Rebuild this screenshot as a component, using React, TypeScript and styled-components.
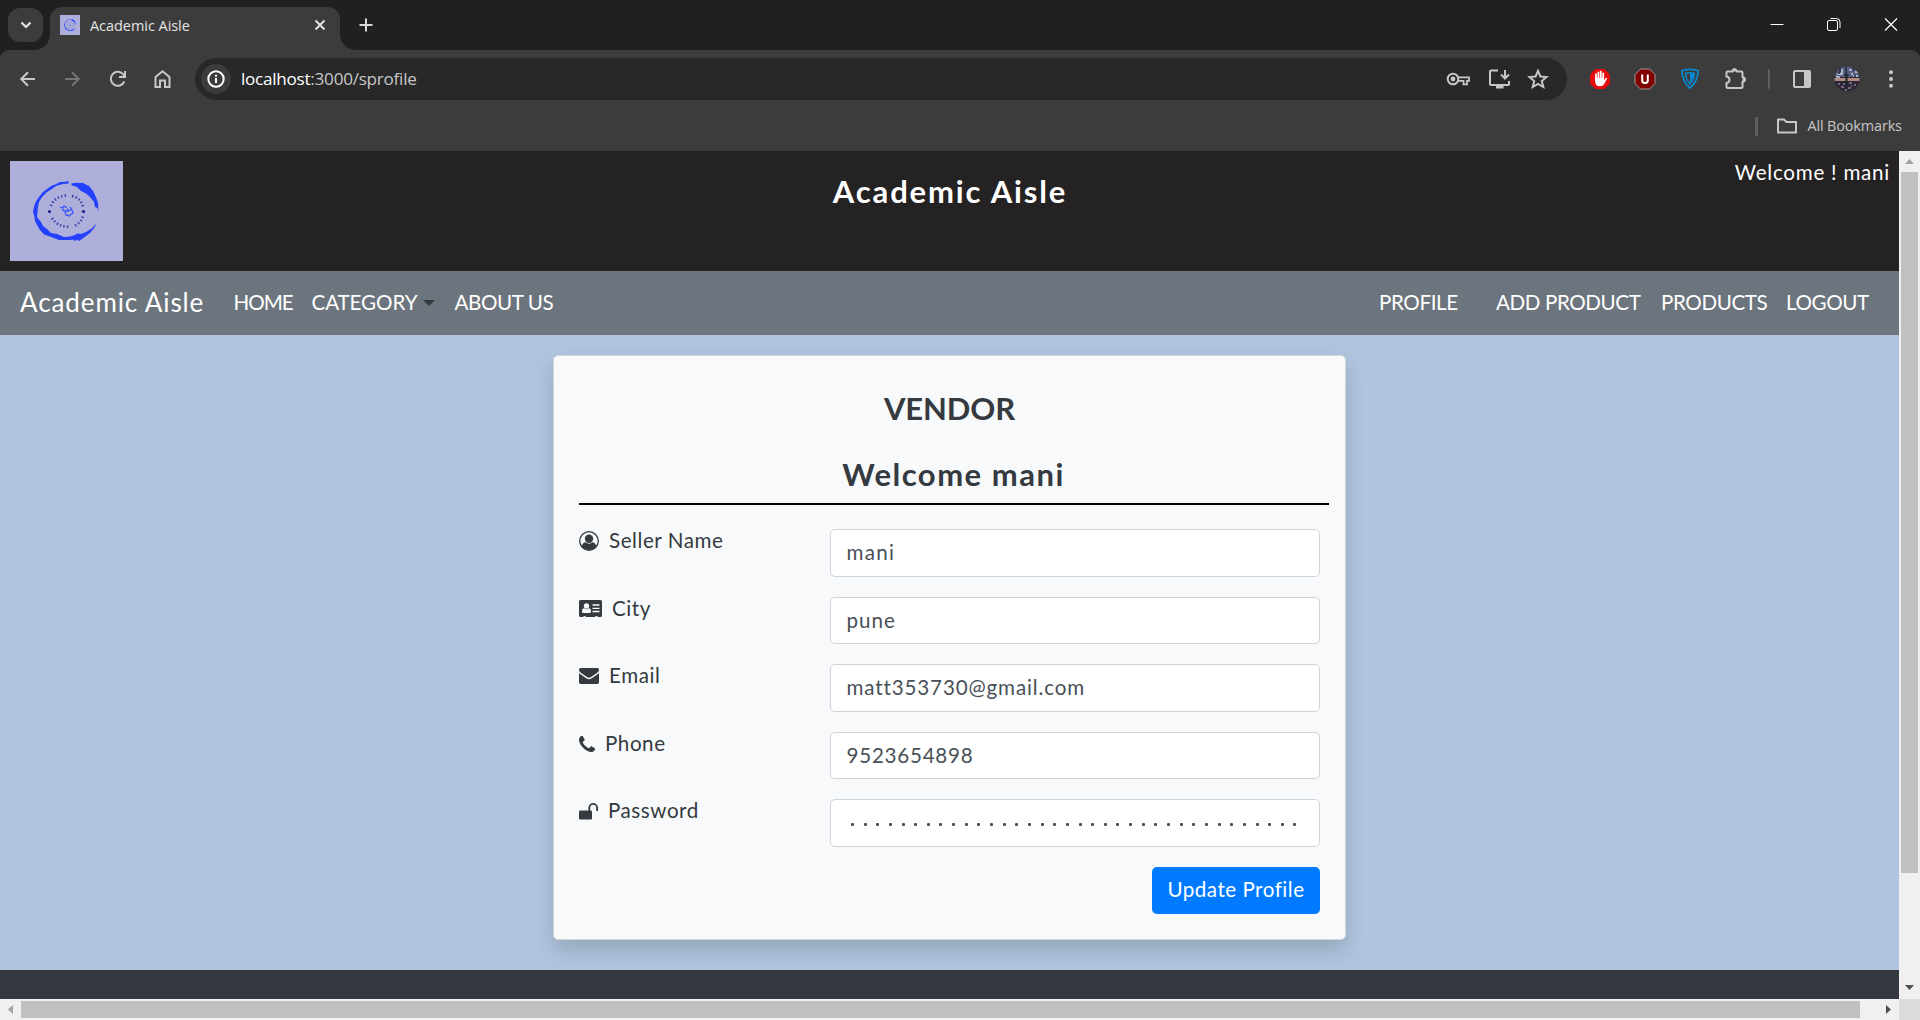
import React from "react";
import styled, { createGlobalStyle } from "styled-components";

const Global = createGlobalStyle`
  *, *::before, *::after { box-sizing: border-box; }
  body { margin: 0; background: #3c3c3c; overflow: hidden; }
`;

const pageFont = `Lato, "Noto Sans", sans-serif`;
const chromeFont = `"Open Sans", "Noto Sans", sans-serif`;

const Window = styled.div`
  width: 1920px;
  height: 1020px;
  display: flex;
  flex-direction: column;
  overflow: hidden;
  background: #3c3c3c;
`;

/* ---------- browser chrome ---------- */
const TabStrip = styled.div`
  height: 50px;
  flex: none;
  display: flex;
  align-items: flex-start;
  background: #1f2120;
  padding-left: 8px;
`;
const TabSearch = styled.div`
  width: 35px;
  height: 34px;
  margin: 8px 7px 0 0;
  border-radius: 12px;
  background: #3c3c3c;
  display: grid;
  place-items: center;
`;
const Tab = styled.div`
  position: relative;
  width: 290px;
  height: 43px;
  margin-top: 7px;
  border-radius: 12px 12px 0 0;
  background: #3c3c3c;
  display: flex;
  align-items: center;
  padding: 0 10px 7px 10px;
  &::before, &::after {
    content: "";
    position: absolute;
    bottom: 0;
    width: 15px;
    height: 15px;
  }
  &::before { left: -15px; background: radial-gradient(circle at 0 0, transparent 14.5px, #3c3c3c 15px); }
  &::after { right: -15px; background: radial-gradient(circle at 100% 0, transparent 14.5px, #3c3c3c 15px); }
`;
const TabTitle = styled.span`
  flex: 1;
  margin-left: 10px;
  padding-top: 1px;
  font: 400 14.5px/20px ${chromeFont};
  letter-spacing: -0.05px;
  color: #e3e3e3;
  white-space: nowrap;
`;
const NewTab = styled.div`
  margin: 15px 0 0 16px;
  width: 20px;
  height: 20px;
`;
const Controls = styled.div`
  margin-left: auto;
  display: flex;
  align-items: center;
  gap: 41px;
  height: 50px;
  padding-right: 21px;
`;
const Toolbar = styled.div`
  position: relative;
  height: 59px;
  flex: none;
  display: flex;
  align-items: center;
  padding-bottom: 1px;
  background: #3c3c3c;
  &::before, &::after {
    content: "";
    position: absolute;
    top: 0;
    width: 9px;
    height: 9px;
  }
  &::before { left: 0; background: radial-gradient(circle at 100% 100%, transparent 8.5px, #1f2120 9px); }
  &::after { right: 0; background: radial-gradient(circle at 0 100%, transparent 8.5px, #1f2120 9px); }
`;
const NavIcons = styled.div`
  display: flex;
  align-items: center;
  gap: 25px;
  width: 195px;
  padding-left: 18px;
`;
const AddressBar = styled.div`
  width: 1372px;
  height: 42px;
  border-radius: 21px;
  background: #282828;
  display: flex;
  align-items: center;
  padding: 0 18px 0 6px;
`;
const InfoDisc = styled.div`
  width: 30px;
  height: 30px;
  border-radius: 50%;
  background: #3c3c3c;
  display: grid;
  place-items: center;
`;
const Url = styled.span`
  flex: 1;
  margin-left: 10px;
  font: 400 17.1px/26px ${chromeFont};
  letter-spacing: -0.25px;
  color: #c7c7c7;
  b { font-weight: 400; color: #fff; }
`;
const AddressIcons = styled.div`
  display: flex;
  align-items: center;
  gap: 16.5px;
`;
const Extensions = styled.div`
  display: flex;
  align-items: center;
  gap: 21px;
  margin-left: 21px;
`;
const Divider = styled.i<{ $h: number; $w: number }>`
  width: ${(p) => p.$w}px;
  height: ${(p) => p.$h}px;
  background: #5e5e5e;
  border-radius: 1px;
`;
const RightTools = styled.div`
  display: flex;
  align-items: center;
  margin-left: 21px;
  gap: 21px;
`;
const Bookmarks = styled.div`
  height: 42px;
  flex: none;
  display: flex;
  align-items: center;
  justify-content: flex-end;
  padding: 0 18px 8px 0;
`;
const FolderWrap = styled.div`
  margin: 0 10px 0 18px;
  display: flex;
`;
const BookmarkText = styled.span`
  width: 94.5px;
  white-space: nowrap;
  font: 400 14.4px/20px ${chromeFont};
  letter-spacing: -0.12px;
  color: #c7c7c7;
`;

/* ---------- viewport ---------- */
const Viewport = styled.div`
  flex: 1;
  display: grid;
  grid-template-columns: 1899px 21px;
  grid-template-rows: 848px 21px;
`;
const Page = styled.div`
  display: flex;
  flex-direction: column;
  background: #b0c4de;
  overflow: hidden;
  font-family: ${pageFont};
`;
const Banner = styled.header`
  height: 120px;
  flex: none;
  background: #252223;
  display: grid;
  grid-template-columns: 400px 1fr 400px;
  padding: 10px 9px 0 10px;
`;
const BannerTitle = styled.h1`
  margin: 10px 0 0;
  text-align: center;
  color: #fff;
  font-weight: 700;
  font-size: 31px;
  line-height: 40px;
  letter-spacing: 1.85px;
`;
const Greeting = styled.div`
  margin-top: -1px;
  text-align: right;
  color: #fff;
  font-size: 20.6px;
  line-height: 24px;
  letter-spacing: 0.75px;
`;
const NavBar = styled.nav`
  height: 64px;
  flex: none;
  background: #6c757d;
  display: flex;
  align-items: center;
  color: #fff;
  padding: 0 0 2px 20px;
`;
const Brand = styled.span`
  width: 213.5px;
  font-size: 26px;
  line-height: 32px;
  letter-spacing: 0.9px;
  white-space: nowrap;
`;
const NavLink = styled.a<{ $w: number; $ls?: number }>`
  width: ${(p) => p.$w}px;
  font-size: 20.6px;
  line-height: 30px;
  letter-spacing: ${(p) => p.$ls ?? -0.4}px;
  white-space: nowrap;
`;
const Caret = styled.i`
  width: 0;
  border: 6px solid transparent;
  border-top-color: #343a40;
  border-bottom: 0;
  margin: 2px 20px 0 0;
`;
const RightLinks = styled.div`
  display: flex;
  margin-left: auto;
`;
const Main = styled.main`
  flex: none;
  height: 635px;
  padding-top: 20px;
  display: flex;
  justify-content: center;
  align-items: flex-start;
`;
const Card = styled.section`
  width: 793px;
  height: 585px;
  border: 1px solid #d3d7dc;
  border-radius: 5px;
  background: #f8f9fa;
  box-shadow: 0 10px 20px rgba(0, 0, 0, 0.15);
  padding: 0 25px;
  color: #343a40;
`;
const Heading = styled.h2<{ $top: number; $ls: number; $shift?: number }>`
  margin: 0;
  padding: ${(p) => p.$top}px 0 0 ${(p) => p.$shift ?? 0}px;
  text-align: center;
  font-weight: 700;
  font-size: 31px;
  line-height: 40px;
  letter-spacing: ${(p) => p.$ls}px;
`;
const Rule = styled.hr`
  width: 750px;
  height: 2px;
  border: 0;
  margin: 9px 0 24px;
  background: #000;
`;
const Row = styled.div`
  display: grid;
  grid-template-columns: 251px 490px;
  height: 67.5px;
`;
const Label = styled.label`
  display: flex;
  align-items: center;
  height: 24px;
  font-size: 20.6px;
  line-height: 24px;
  letter-spacing: 0.55px;
  white-space: nowrap;
  svg { flex: none; }
`;
const LabelText = styled.span<{ $gap: number }>`
  margin-left: ${(p) => p.$gap}px;
  padding-bottom: 2px;
`;
const Field = styled.div<{ $ls: number }>`
  height: 47.5px;
  border: 1px solid #ced4da;
  border-radius: 5px;
  background: #fff;
  padding: 0 15.5px;
  font-size: 20.6px;
  line-height: 44px;
  letter-spacing: ${(p) => p.$ls}px;
  color: #495057;
`;
const Dots = styled.div`
  height: 46px;
  display: flex;
  align-items: center;
  gap: 9.65px;
  padding: 3px 0 0 4.5px;
  i { width: 3px; height: 3px; border-radius: 1px; background: #495057; flex: none; }
`;
const Actions = styled.div`
  display: flex;
  width: 741px;
  justify-content: flex-end;
`;
const Update = styled.button`
  width: 168px;
  height: 47px;
  border: 0;
  border-radius: 5px;
  padding: 0 0 2px;
  background: #007bff;
  color: #fff;
  font: 400 20.6px/44px ${pageFont};
  letter-spacing: 0.5px;
  white-space: nowrap;
`;
const Footer = styled.footer`
  flex: 1;
  background: #343841;
`;
const VScroll = styled.div`
  background: #f0f0f0;
  display: flex;
  flex-direction: column;
  align-items: center;
`;
const VThumb = styled.div`
  width: 17px;
  height: 701px;
  margin-bottom: auto;
  background: #c0c0c0;
`;
const HScroll = styled.div`
  background: #f0f0f0;
  display: flex;
  align-items: center;
`;
const HThumb = styled.div`
  width: 1839px;
  height: 17px;
  margin-right: auto;
  background: #c0c0c0;
`;
const Corner = styled.div`
  background: #dcdcdc;
`;
const ArrowBox = styled.div<{ $w: number; $h: number }>`
  width: ${(p) => p.$w}px;
  height: ${(p) => p.$h}px;
  display: grid;
  place-items: center;
`;
const Arrow = styled.i<{ $dir: "up" | "down" | "left" | "right" }>`
  width: 9px;
  height: 9px;
  background: ${(p) => (p.$dir === "up" || p.$dir === "left" ? "#a3a3a3" : "#505050")};
  clip-path: ${(p) =>
    ({
      up: "polygon(0 78%, 50% 22%, 100% 78%)",
      down: "polygon(0 22%, 100% 22%, 50% 78%)",
      left: "polygon(78% 0, 78% 100%, 22% 50%)",
      right: "polygon(22% 0, 78% 50%, 22% 100%)",
    })[p.$dir]};
`;

const stroke = { fill: "none", stroke: "#c7c7c7", strokeWidth: 2 } as const;

/* Ink ring with a circular motto and a small emblem in the middle */
const Logo = ({ w, h }: { w: number; h: number }) => (
  <svg width={w} height={h} viewBox="0 0 113 100" preserveAspectRatio="none">
    <rect width="113" height="100" fill="#aeaedb" />
    <g fill="#2440ff">
      <path d="M58 20 L54 21 L50 21 L45 23.500 L41 25 L37 28 L33 31 L29 36 L27 39 Q24.500 42 24 46 L23 51 L24.500 56 L25 60 L27 64 L30 69 L34 73.500 L40 75.500 L49 79 L60 79 L63 78.500 L65 80 L67 78.500 L69 80 L72 78 L76 75 L80 72 L84 67 L87 62 L81 68 L76 71 L71 73 L67 72.500 L65 74 L60 75.500 L54 76 L47 73 L41 72 L37 68 L33 65 L31 61 L27 56 L27.500 51 L28 46 L29 41 L32 36 L37 31 L42 28 L46 25 L53 23 L59 22.500 Z" />
      <path d="M61 22.500 L66 21.800 L73 22 L79 25 L83 30 L86 36 L88 42 L88.500 51 L87.500 47 L85 46 L84 41 L80 36 L76 32.500 L71 30 L67 26 L62 24.500 Z" />
    </g>
    <path d="M41 45Q44 36 56 34.500M62 35Q71 37 73 46M42 57Q47 65.500 60 66M65 64.500Q71 61.500 73 55" fill="none" stroke="#3b42a8" strokeWidth="2.600" strokeDasharray="1.400 2.200" />
    <circle cx="39.500" cy="50.500" r="1.600" fill="#1b2390" />
    <circle cx="73.500" cy="50.500" r="1.600" fill="#1b2390" />
    <path d="M50 46l3 1 1-2 3 2M52 48l2 2h4l4-2M60 46l2 3 1 3-3 2M55 51l1 3 4 1M57 48l2 2" fill="none" stroke="#3a52fa" strokeWidth="1.300" />
  </svg>
);

const fields = [
  { label: "Seller Name", value: "mani", gap: 10, ls: 1.3 },
  { label: "City", value: "pune", gap: 9, ls: 1 },
  { label: "Email", value: "matt353730@gmail.com", gap: 10, ls: 0.85 },
  { label: "Phone", value: "9523654898", gap: 10, ls: 0.75 },
  { label: "Password", value: "", gap: 10, ls: 0 },
];

/* Font Awesome 4 shapes: user-circle-o, address-card, envelope, phone, unlock */
const icons = [
  <svg key="u" width="20" height="20" viewBox="0 0 20 20">
    <circle cx="10" cy="10" r="9.300" fill="none" stroke="#343a40" strokeWidth="1.300" />
    <circle cx="10" cy="7.800" r="4.200" fill="#343a40" />
    <path d="M2.600 15.400C3.400 12.400 5 11.300 6.500 11.300Q10 14.200 13.500 11.300C15 11.300 16.600 12.400 17.400 15.400A9.300 9.300 0 0 1 2.600 15.400Z" fill="#343a40" />
  </svg>,
  <svg key="c" width="24" height="18" viewBox="0 0 24 18">
    <path d="M1.500 0h20a1.500 1.500 0 0 1 1.500 1.500v14a1.500 1.500 0 0 1-1.500 1.500h-3v-1h-2v1h-10v-1h-2v1h-3A1.500 1.500 0 0 1 0 15.500v-14A1.500 1.500 0 0 1 1.500 0z" fill="#343a40" />
    <circle cx="7.500" cy="6" r="2.700" fill="#f8f9fa" />
    <path d="M3 11.500Q3 8.300 5.300 8.300Q7.500 10 9.700 8.300Q12 8.300 12 11.500Q12 13 10.500 13h-6Q3 13 3 11.500z" fill="#f8f9fa" />
    <path d="M13.500 5h7M13.500 8.300h7M13.500 11.500h7" stroke="#f8f9fa" strokeWidth="1.300" />
  </svg>,
  <svg key="e" width="20" height="16" viewBox="0 0 20 16">
    <path d="M1.500 0h17Q20 0 20 1.700Q20 3.500 18.300 4.700L12 9Q10 10.400 8 9L1.700 4.700Q0 3.500 0 1.700Q0 0 1.500 0z" fill="#343a40" />
    <path d="M0 5.200L7.200 10.200Q10 12.200 12.800 10.200L20 5.200V14.300Q20 16 18.300 16H1.700Q0 16 0 14.300z" fill="#343a40" />
  </svg>,
  <svg key="p" width="16" height="16" viewBox="0 0 1408 1408">
    <path fill="#343a40" d="M1408 1112q0 27-10 70.500t-21 68.500q-21 50-122 106-94 51-186 51-27 0-52.500-3.500T959 1392t-47.500-14.500T856 1357t-49-18q-98-35-175-83-128-79-264.500-215.500T152 776q-48-77-83-175-3-9-18-49t-20.500-55.500T16 449 3.500 391.500 0 339q0-92 51-186Q107 52 157 31q25-11 68.500-21T296 0q14 0 21 3 18 6 53 76 11 19 30 54t35 63.500 31 53.500q3 4 17.500 25t21.500 35.500 7 28.500q0 20-28.500 50t-62 55-62 53-28.500 46q0 9 5 22.500t8.500 20.500 14 24 11.500 19q76 137 174 235t235 174q2 1 19 11.500t24 14 20.500 8.500 22.500 5q18 0 46-28.500t53-62 55-62 50-28.500q14 0 28.500 7t35.500 21.500 25 17.500q25 15 53.500 31t63.500 35 54 30q70 35 76 53 3 7 3 21z" />
  </svg>,
  <svg key="l" width="19" height="17" viewBox="0 0 19 17">
    <rect x="0" y="7.500" width="13" height="9" rx="1" fill="#343a40" />
    <path d="M10.300 8V4.800a3.900 3.900 0 0 1 7.800 0V8" fill="none" stroke="#343a40" strokeWidth="1.800" />
  </svg>,
];

export default function App() {
  return (
    <Window>
      <Global />
      <TabStrip>
        <TabSearch>
          <svg width="12" height="8" viewBox="0 0 12 8"><path d="M1.500 1.500L6 6l4.500-4.500" {...stroke} stroke="#e3e3e3" strokeWidth="2.200" /></svg>
        </TabSearch>
        <Tab>
          <Logo w={20} h={20} />
          <TabTitle>Academic Aisle</TabTitle>
          <svg width="20" height="20" viewBox="0 0 20 20"><path d="M5.500 5.500l9 9m0-9l-9 9" {...stroke} stroke="#e3e3e3" /></svg>
        </Tab>
        <NewTab>
          <svg width="20" height="20" viewBox="0 0 20 20"><path d="M10 3.500v13M3.500 10h13" {...stroke} stroke="#d8d8d8" /></svg>
        </NewTab>
        <Controls>
          <svg width="16" height="16" viewBox="0 0 16 16"><path d="M1.500 7.500h13" stroke="#fff" /></svg>
          <svg width="16" height="16" viewBox="0 0 16 16" fill="none" stroke="#fff"><rect x="1.500" y="3.500" width="10" height="10" rx="1.500" /><path d="M4.500 1.500h6q3.500 0 3.500 3.500v6" /></svg>
          <svg width="16" height="16" viewBox="0 0 16 16"><path d="M2 1.500l12 12M14 1.500L2 13.500" stroke="#fff" strokeWidth="1.200" /></svg>
        </Controls>
      </TabStrip>
      <Toolbar>
        <NavIcons>
          <svg width="20" height="20" viewBox="0 0 20 20"><path d="M17 10H3.500M10 3.200L3.200 10l6.800 6.800" {...stroke} /></svg>
          <svg width="20" height="20" viewBox="0 0 20 20"><path d="M2 10h13.500M9 3.200l6.800 6.800-6.800 6.800" {...stroke} stroke="#757575" /></svg>
          <svg width="20" height="20" viewBox="0 0 20 20"><path d="M16.300 12.500A7 7 0 1 1 15.500 5.700L16.500 7.200M17 2v6h-6" {...stroke} /></svg>
          <svg width="20" height="20" viewBox="0 0 20 20"><path d="M2.500 8l7-5.800L16.500 8v10H12v-6.500H7V18H2.500z" {...stroke} /></svg>
        </NavIcons>
        <AddressBar>
          <InfoDisc>
            <svg width="18" height="18" viewBox="0 0 18 18"><circle cx="9" cy="9" r="7.700" {...stroke} stroke="#fff" /><path d="M9 8v5M9 4.800v2" stroke="#fff" strokeWidth="2" /></svg>
          </InfoDisc>
          <Url><b>localhost</b>:3000/sprofile</Url>
          <AddressIcons>
            <svg width="24" height="20" viewBox="0 0 24 20"><circle cx="7" cy="10" r="5.300" {...stroke} /><circle cx="7" cy="10" r="2.400" fill="#c7c7c7" /><path d="M12 8.300h11v3.600h-2v3.400h-3.500v-3.400H12" {...stroke} strokeWidth="1.800" /></svg>
            <svg width="24" height="22" viewBox="0 0 24 22"><path d="M11 2.500H4Q3 2.500 3 3.500V16q0 1 1 1h17q1 0 1-1v-3M18 2v8M14 6.500l4 4L22 6.500" {...stroke} /><path d="M9 17h7.500v3.500H9z" fill="#c7c7c7" /></svg>
            <svg width="22" height="22" viewBox="0 0 22 22"><path d="M11 2.800l2.400 5.700 6.100.5-4.700 4 1.500 6L11 15.800 5.700 19l1.500-6-4.700-4 6.100-.5z" {...stroke} /></svg>
          </AddressIcons>
        </AddressBar>
        <Extensions>
          <svg width="24" height="24" viewBox="0 0 24 24">
            <path d="M7.500 2h9L22 7.500v9L16.500 22h-9L2 16.500v-9z" fill="#e60c0c" />
            <path d="M8 13V7.200M10.400 12V5.300M12.800 12V4.700M15.200 12V6.300" stroke="#fff" strokeWidth="1.800" strokeLinecap="round" />
            <path d="M7.100 11h9v2l2-2.200q1.600-.4.800 1L16.200 17q-1.300 2.300-4.200 2.300-4.900 0-4.900-5z" fill="#fff" />
          </svg>
          <svg width="24" height="24" viewBox="0 0 24 24">
            <path d="M7.500 2h9L22 7.500v9L16.500 22h-9L2 16.500v-9z" fill="#800000" stroke="#a39a9a" />
            <path d="M9.200 7.500v6q0 2.500 2.800 2.500t2.800-2.500v-6" fill="none" stroke="#fff" strokeWidth="2" />
          </svg>
          <svg width="24" height="24" viewBox="0 0 24 24" fill="none" stroke="#078bd4">
            <path d="M3.800 3.700Q12 1 20.200 3.700Q19.500 15 12 21Q4.500 15 3.800 3.700z" strokeWidth="1.700" />
            <path d="M7.500 6.500Q12 5 16.500 6.500Q16 13 12 17Q8 13 7.500 6.500z" strokeWidth="1.400" />
            <path d="M12.500 6.500l3 .3q-.3 4.500-3 8z" fill="#078bd4" />
          </svg>
          <svg width="24" height="24" viewBox="0 0 24 24"><path d="M3.500 5.500Q3.500 4.500 4.500 4.500H9.500Q10 2 11.500 2T14 4.500H18.500Q19.500 4.500 19.500 5.500V10Q22 10.500 22 12.500T19.500 15V20Q19.500 21 18.500 21H4.500Q3.500 21 3.500 20V16Q6.500 15.500 6.500 12.700T3.500 9.500z" {...stroke} /><path d="M9.500 4.500Q10 2 11.500 2T14 4.500zM19.500 10Q22 10.500 22 12.500T19.500 15z" fill="#c7c7c7" /></svg>
        </Extensions>
        <RightTools>
          <Divider $w={2} $h={20} />
          <svg width="22" height="22" viewBox="0 0 22 22"><rect x="3" y="3" width="16" height="16" rx="1" {...stroke} /><path d="M13 3h6v16h-6z" fill="#c7c7c7" /></svg>
          <svg width="26" height="26" viewBox="0 0 26 26">
            <clipPath id="avatar"><circle cx="13" cy="13" r="12.500" /></clipPath>
            <g clipPath="url(#avatar)">
              <rect width="26" height="26" fill="#2a2638" />
              <path d="M0 0h26v11H0z" fill="#59607f" />
              <path d="M0 12h26v3H0z" fill="#b28c83" />
              <path d="M3 8h4M8 3v6M15 4h4M17 8h2M21 6h3M2 11h4M19 10h5" stroke="#c3cfe9" strokeWidth="1.500" />
              <path d="M6 2v4M12 0v10M19 2v3M5 6v2M10 9h5M21 9v2" stroke="#23273f" strokeWidth="1.600" />
              <path d="M4 18h2M9 18h2M15 17h3M20 19h2M7 21h3M14 22h3M11 24h2M17 20h1" stroke="#8f7d92" strokeWidth="1.300" />
              <path d="M12.500 9v10M9 16h3" stroke="#1b2420" strokeWidth="2" />
            </g>
          </svg>
          <svg width="20" height="20" viewBox="0 0 20 20" fill="#c7c7c7"><circle cx="10" cy="3.200" r="2" /><circle cx="10" cy="10" r="2" /><circle cx="10" cy="16.800" r="2" /></svg>
        </RightTools>
      </Toolbar>
      <Bookmarks>
        <Divider $w={3} $h={19} />
        <FolderWrap>
          <svg width="22" height="18" viewBox="0 0 22 18"><path d="M2 2.500h6l2.500 2.500H20v10.500H2z" {...stroke} strokeLinejoin="round" /></svg>
        </FolderWrap>
        <BookmarkText>All Bookmarks</BookmarkText>
      </Bookmarks>

      <Viewport>
        <Page>
          <Banner>
            <Logo w={113} h={100} />
            <BannerTitle>Academic Aisle</BannerTitle>
            <Greeting>Welcome ! mani</Greeting>
          </Banner>
          <NavBar>
            <Brand>Academic Aisle</Brand>
            <NavLink $w={78} $ls={-1}>HOME</NavLink>
            <NavLink $w={111} $ls={-0.1}>CATEGORY</NavLink>
            <Caret />
            <NavLink $w={100}>ABOUT US</NavLink>
            <RightLinks>
              <NavLink $w={117}>PROFILE</NavLink>
              <NavLink $w={165}>ADD PRODUCT</NavLink>
              <NavLink $w={125}>PRODUCTS</NavLink>
              <NavLink $w={113}>LOGOUT</NavLink>
            </RightLinks>
          </NavBar>
          <Main>
            <Card>
              <Heading $top={32} $ls={-0.1}>VENDOR</Heading>
              <Heading $top={26} $ls={1.5} $shift={8}>Welcome mani</Heading>
              <Rule />
              {fields.map((f, i) => (
                <Row key={f.label}>
                  <Label>
                    {icons[i]}
                    <LabelText $gap={f.gap}>{f.label}</LabelText>
                  </Label>
                  <Field $ls={f.ls}>
                    {f.value || (
                      <Dots>
                        {Array.from({ length: 36 }, (_, n) => <i key={n} />)}
                      </Dots>
                    )}
                  </Field>
                </Row>
              ))}
              <Actions><Update>Update Profile</Update></Actions>
            </Card>
          </Main>
          <Footer />
        </Page>
        <VScroll>
          <ArrowBox $w={21} $h={21}><Arrow $dir="up" /></ArrowBox>
          <VThumb />
          <ArrowBox $w={21} $h={23}><Arrow $dir="down" /></ArrowBox>
        </VScroll>
        <HScroll>
          <ArrowBox $w={21} $h={21}><Arrow $dir="left" /></ArrowBox>
          <HThumb />
          <ArrowBox $w={21} $h={21}><Arrow $dir="right" /></ArrowBox>
        </HScroll>
        <Corner />
      </Viewport>
    </Window>
  );
}
